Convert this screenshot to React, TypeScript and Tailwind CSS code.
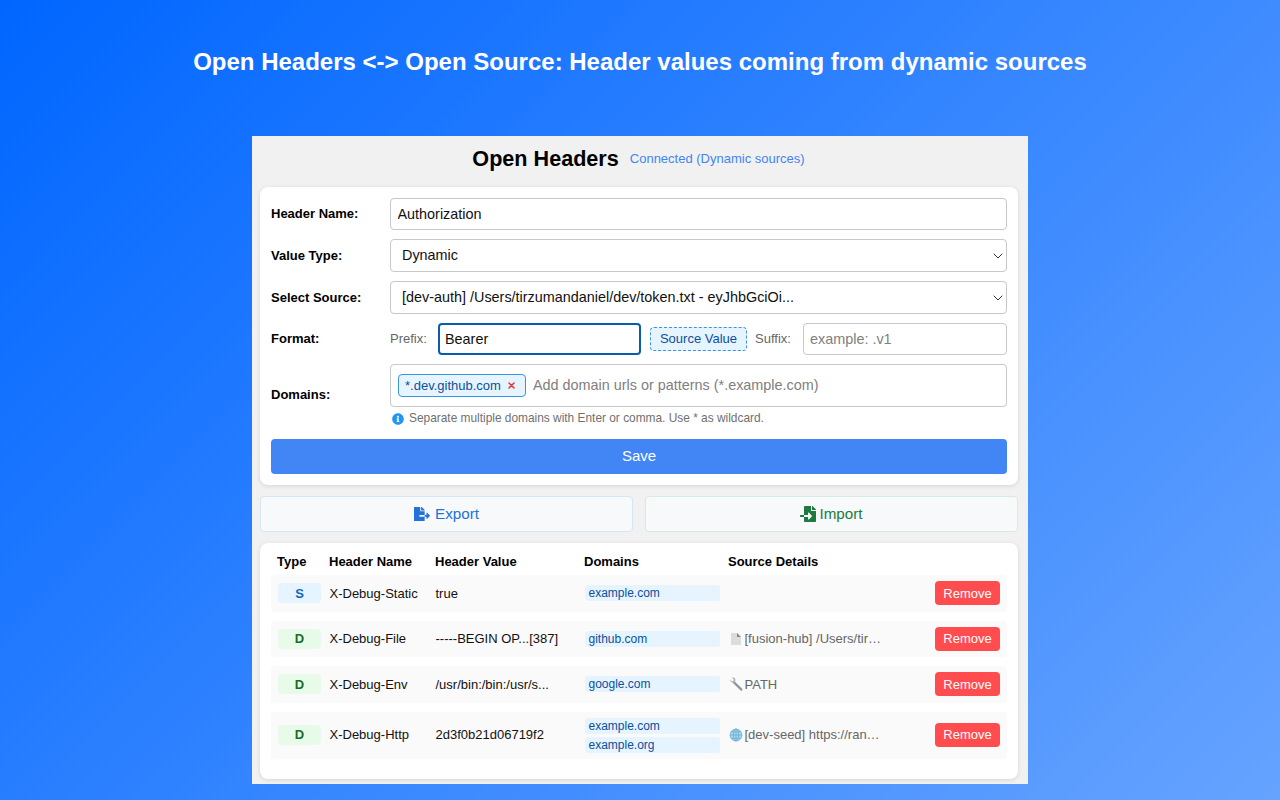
import { FaFileExport, FaFileImport, FaInfoCircle } from "react-icons/fa";

const headers = [
  { type: "S", name: "X-Debug-Static", value: "true", domains: ["example.com"], source: "", icon: "" },
  { type: "D", name: "X-Debug-File", value: "-----BEGIN OP...[387]", domains: ["github.com"], source: "[fusion-hub] /Users/tir…", icon: "file" },
  { type: "D", name: "X-Debug-Env", value: "/usr/bin:/bin:/usr/s...", domains: ["google.com"], source: "PATH", icon: "env" },
  { type: "D", name: "X-Debug-Http", value: "2d3f0b21d06719f2", domains: ["example.com", "example.org"], source: "[dev-seed] https://ran…", icon: "http" },
];

function SourceIcon({ kind }: { kind: string }) {
  if (kind === "file") {
    return (
      <svg width="14" height="14" viewBox="0 0 14 14" className="shrink-0">
        <path d="M2 1h6l4 4v8H2z" fill="#dcdcdc" />
        <path d="M8 1l4 4H8z" fill="#8a8a8a" />
      </svg>
    );
  }
  if (kind === "env") {
    return (
      <svg width="14" height="14" viewBox="0 0 14 14" className="shrink-0">
        <path d="M5.2 5.6L12.4 12.6" stroke="#8f9499" strokeWidth="2.2" strokeLinecap="round" />
        <path d="M1 2.6l2 1.8 1.4-.4.4-1.5L3 .8C4.600.2 6.200 1 6.400 2.600 6.500 3.800 6 5 5.200 5.600 3.600 6.600 1 5 1 2.600z" fill="#a9aeb3" />
      </svg>
    );
  }
  return (
    <svg width="14" height="14" viewBox="0 0 14 14" fill="none" className="shrink-0">
      <circle cx="7" cy="7" r="6" fill="#a8d8f0" stroke="#6fb2d6" strokeWidth="0.8" />
      <ellipse cx="7" cy="7" rx="2.8" ry="6" stroke="#5ea6cc" strokeWidth="0.7" />
      <path d="M1 7h12M2 3.800h10M2 10.200h10M7 1v12" stroke="#5ea6cc" strokeWidth="0.7" />
    </svg>
  );
}

function Chevron() {
  return (
    <svg width="10" height="6" viewBox="0 0 10 6" fill="none" className="absolute right-[4.500px] top-[14px] pointer-events-none">
      <path d="M1 1l4 4 4-4" stroke="#333" strokeWidth="1" strokeLinecap="round" strokeLinejoin="round" />
    </svg>
  );
}

function Select({ value }: { value: string }) {
  return (
    <div className="relative flex-1">
      <select
        defaultValue={value}
        className="block w-full h-[33px] appearance-none rounded border border-[#c8c8c8] bg-white pl-[11px] pr-6 text-[14.400px] text-[#111] outline-none"
      >
        <option>{value}</option>
      </select>
      <Chevron />
    </div>
  );
}

export default function App() {
  return (
    <div className="h-[800px] overflow-hidden flex flex-col items-center bg-[linear-gradient(135deg,#0066ff_0%,#66a3ff_100%)] font-['Liberation_Sans',Arial,sans-serif]">
      <h1 className="h-[136px] pt-[47px] text-[24px] leading-[30px] font-bold text-white">
        Open Headers &lt;-&gt; Open Source: Header values coming from dynamic sources
      </h1>

      <div className="w-[776px] h-[648px] bg-[#f1f1f1] pl-2 pr-[10px]">
        <div className="h-[51px] flex items-center justify-center gap-[11px] pb-[5px] pr-[1px]">
          <span className="text-[21.600px] font-bold text-black">Open Headers</span>
          <span className="text-[13px] text-[#4285f4]">Connected (Dynamic sources)</span>
        </div>

        <div className="h-[298px] bg-white rounded-lg shadow-[0_1px_4px_rgba(0,0,0,0.12)] px-[11px] pt-[11px]">
          <div className="flex items-center h-[32px] mb-[9px]">
            <label className="w-[119px] text-[13px] font-bold text-black">Header Name:</label>
            <input
              readOnly
              value="Authorization"
              className="flex-1 h-[32px] rounded border border-[#c8c8c8] px-[6.500px] text-[14.400px] text-[#111] outline-none"
            />
          </div>
          <div className="flex items-center h-[33px] mb-[9px]">
            <label className="w-[119px] text-[13px] font-bold text-black">Value Type:</label>
            <Select value="Dynamic" />
          </div>
          <div className="flex items-center h-[33px] mb-[9px]">
            <label className="w-[119px] text-[13px] font-bold text-black">Select Source:</label>
            <Select value="[dev-auth] /Users/tirzumandaniel/dev/token.txt - eyJhbGciOi..." />
          </div>
          <div className="flex items-center h-[32px] mb-[9px]">
            <label className="w-[119px] text-[13px] font-bold text-black">Format:</label>
            <span className="w-[48px] text-[13px] text-[#666]">Prefix:</span>
            <input
              readOnly
              value="Bearer"
              className="w-[203px] h-[32px] rounded border-2 border-[#0b5cad] px-[5px] text-[14.400px] text-[#111] outline-none"
            />
            <span className="ml-[9px] w-[97px] h-[24px] flex items-center justify-center rounded border border-dashed border-[#3b94e0] bg-[#e6f4ff] text-[13px] text-[#0b4f9e]">
              Source Value
            </span>
            <span className="ml-[8px] w-[48px] text-[13px] text-[#666]">Suffix:</span>
            <input
              readOnly
              placeholder="example: .v1"
              className="flex-1 h-[32px] rounded border border-[#c8c8c8] px-[6px] text-[14.400px] text-[#111] outline-none placeholder:text-[#808080]"
            />
          </div>
          <div className="flex items-center h-[63px] mb-[12px]">
            <label className="w-[119px] pb-[2px] text-[13px] font-bold text-black">Domains:</label>
            <div className="flex-1 h-[63px]">
              <div className="h-[43px] rounded border border-[#c8c8c8] flex items-center pl-[7px] gap-[7px]">
                <span className="h-[23px] w-[128px] flex items-center rounded border border-[#3b94e0] bg-[#e6f4ff] pl-[6px] text-[13px] text-[#0b4f9e]">
                  *.dev.github.com
                  <svg width="7" height="7" viewBox="0 0 7 7" className="ml-[7px]">
                    <path d="M1 1l5 5M6 1l-5 5" stroke="#e5383b" strokeWidth="1.600" strokeLinecap="round" />
                  </svg>
                </span>
                <input
                  readOnly
                  placeholder="Add domain urls or patterns (*.example.com)"
                  className="flex-1 text-[14.400px] outline-none placeholder:text-[#808080]"
                />
              </div>
              <div className="flex items-center gap-[5px] pl-[2px] mt-[5px] h-[14px] text-[11.900px] text-[#707070]">
                <FaInfoCircle className="text-[12px] text-[#2196f3]" />
                Separate multiple domains with Enter or comma. Use * as wildcard.
              </div>
            </div>
          </div>
          <button className="w-full h-[35px] rounded bg-[#4285f4] text-[15px] text-white">Save</button>
        </div>

        <div className="flex gap-3 mt-[11px] h-[36px]">
          <button className="flex-1 flex items-center justify-center gap-[5px] rounded border border-[#d6e6f7] bg-[#f7f9fb] text-[15.200px] text-[#2272d9]">
            <FaFileExport className="text-[16px]" />
            Export
          </button>
          <button className="flex-1 flex items-center justify-center gap-[3px] rounded border border-[#d8ebe0] bg-[#f7f9fb] text-[15.200px] text-[#1c7c3c]">
            <FaFileImport className="text-[16px]" />
            Import
          </button>
        </div>

        <div className="h-[236px] mt-[11px] bg-white rounded-lg shadow-[0_1px_4px_rgba(0,0,0,0.12)] px-[11px]">
          <div className="grid grid-cols-[52px_106px_149px_144px_1fr] h-[32px] items-center pl-[6px] pt-[5px] text-[13px] font-bold text-black">
            <span>Type</span>
            <span>Header Name</span>
            <span>Header Value</span>
            <span>Domains</span>
            <span>Source Details</span>
          </div>
          <div className="flex flex-col gap-[9px]">
            {headers.map((h) => (
              <div
                key={h.name}
                className={`grid grid-cols-[51.500px_106px_149px_144px_1fr_65px] items-center rounded pl-[7px] pr-[7px] bg-[#fafafa] text-[13px] text-[#111] ${h.domains.length > 1 ? "h-[47px]" : "h-[36.500px]"}`}
              >
                <span
                  className={`w-[43px] h-[20px] flex items-center justify-center rounded text-[13px] font-bold ${h.type === "S" ? "bg-[#e6f4ff] text-[#1565c0]" : "bg-[#e8fbe8] text-[#176c2a]"}`}
                >
                  {h.type}
                </span>
                <span>{h.name}</span>
                <span>{h.value}</span>
                <div className="flex flex-col gap-[3px]">
                  {h.domains.map((d) => (
                    <span key={d} className="w-[135px] h-[16px] flex items-center rounded-[3px] bg-[#e6f4ff] pl-[4px] text-[12px] text-[#0b4f9e]">
                      {d}
                    </span>
                  ))}
                </div>
                <span className="flex items-center gap-[2px] text-[#666]">
                  {h.icon && <SourceIcon kind={h.icon} />}
                  {h.source}
                </span>
                <button className="h-[24px] rounded bg-[#ff4d4f] text-[13px] text-white">Remove</button>
              </div>
            ))}
          </div>
        </div>
      </div>
    </div>
  );
}
